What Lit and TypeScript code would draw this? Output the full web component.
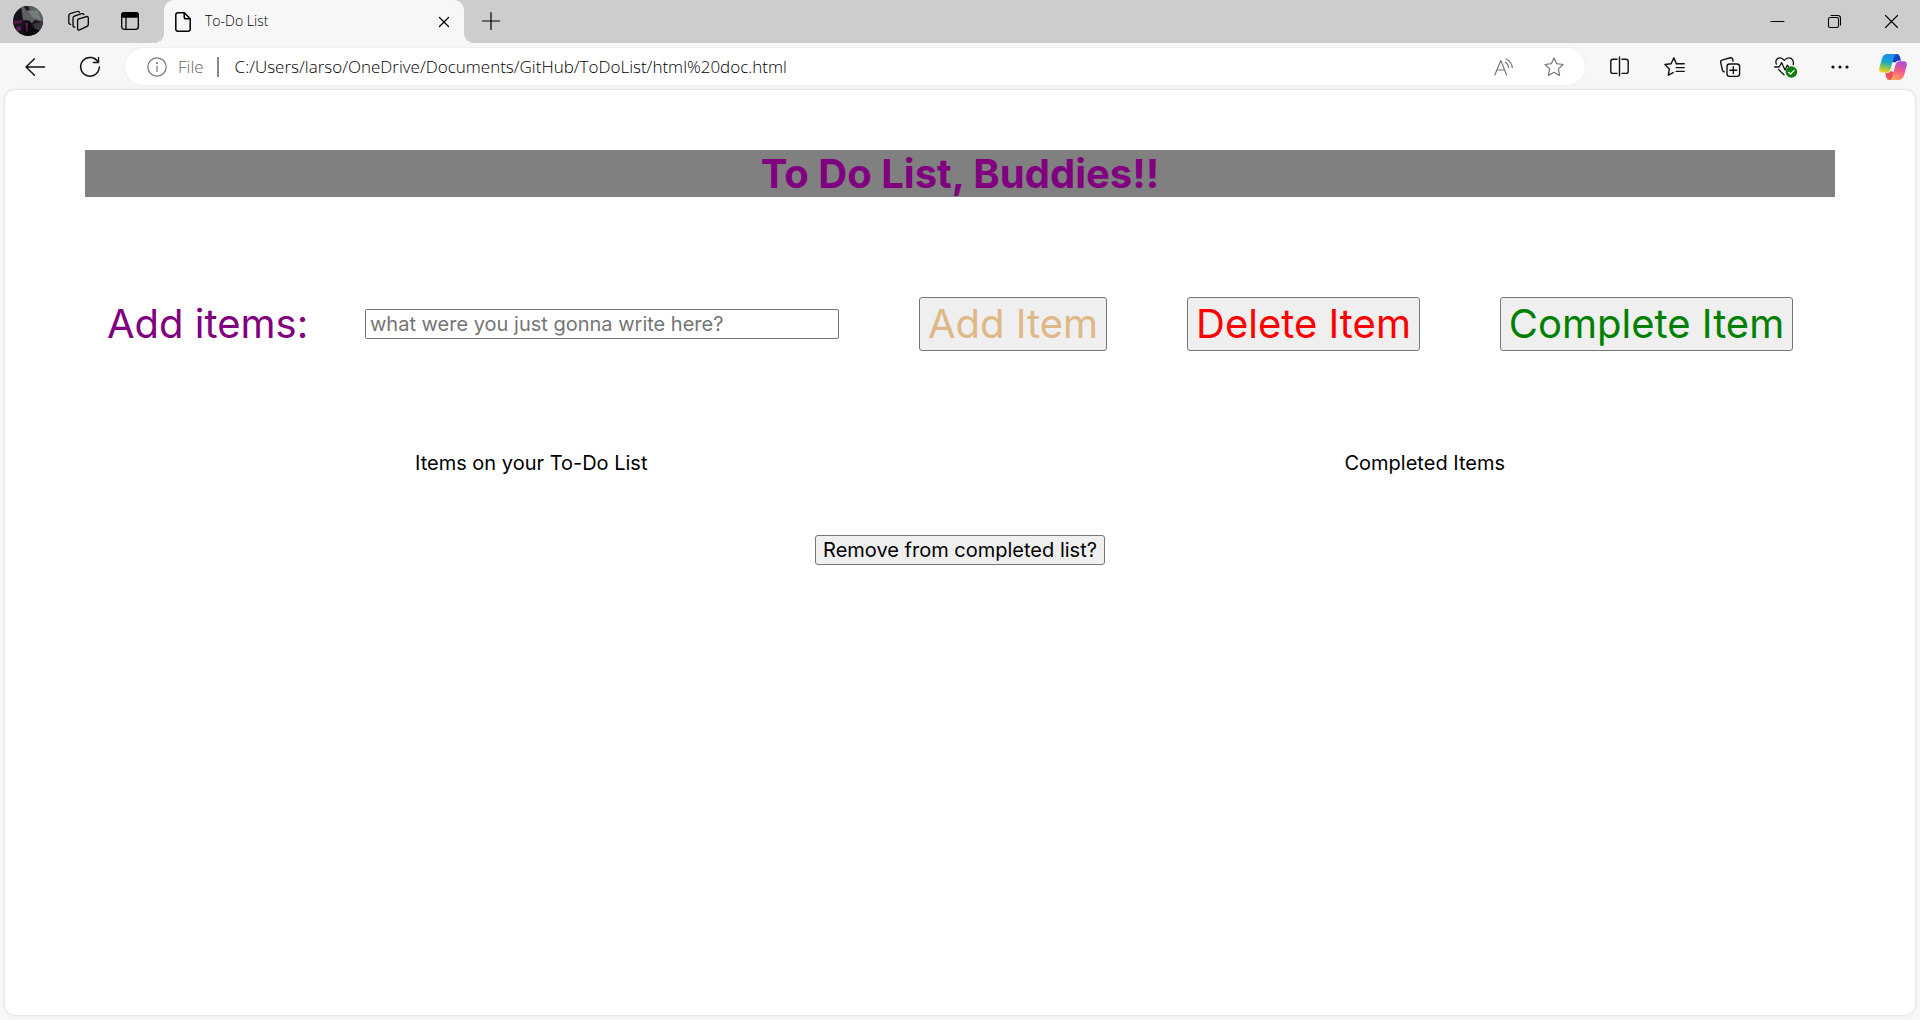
import { LitElement, html, css, svg } from "lit";
import { customElement } from "lit/decorators.js";

const line = css`
  svg {
    display: block;
    fill: none;
    stroke: currentColor;
    stroke-linecap: round;
    stroke-linejoin: round;
    overflow: visible;
  }
  button {
    font: inherit;
    color: inherit;
  }
  .icon-btn {
    display: flex;
    align-items: center;
    justify-content: center;
    flex: none;
    padding: 0;
    border: 0;
    background: none;
  }
`;

const icon = (w: number, h: number, body: unknown, sw = 1.3) =>
  html`<svg width=${w} height=${h} viewBox="0 0 ${w} ${h}" stroke-width=${sw} aria-hidden="true">${body}</svg>`;

const starPath = "M10 .9 L12.7 6.7 L19 7.5 L14.4 11.9 L15.6 18.4 L10 15.3 L4.4 18.4 L5.6 11.9 L1 7.5 L7.3 6.7 Z";

const icons = {
  avatar: icon(30, 30, svg`
    <defs><clipPath id="face"><circle cx="15" cy="15" r="15"/></clipPath></defs>
    <g clip-path="url(#face)" stroke="none">
      <rect width="30" height="30" fill="#17131c"/>
      <path d="M8 0H30V16L22 14L19 17L10 14Z" fill="#5c6062"/>
      <path d="M15 5L25 4L28 14L20 12Z" fill="#777d7c"/>
      <path d="M10 0L14 5L17 3L15 0Z" fill="#1d1d20"/>
      <path d="M12 14L17 15L19 22L27 20L26 30H10Z" fill="#0b080e"/>
      <path d="M1 15L9 14V17L1 18Z" fill="#5b1648"/>
      <path d="M3 21L8 20L8 24L4 25Z" fill="#6b1a58"/>
      <path d="M12 17L15 16V25L13 26Z" fill="#4c183f"/>
      <path d="M20 18L30 15V25L22 23Z" fill="#39363d"/>
    </g>`),
  workspaces: icon(21, 20, svg`
    <path d="M10.2 8.2 L18.4 5.6 Q20.3 5.1 20.3 7 V13.4 Q20.3 14.8 19 15.4 L11.6 18.9 Q9.6 19.6 9.6 17.7 V9.6 Q9.6 8.5 10.2 8.2Z"/>
    <path d="M6.8 16.2 Q5 16.2 5 14.3 V7.2 Q5 5.6 6.4 5.2 L13.6 2.7 Q15.4 2.3 15.9 3.6"/>
    <path d="M2.6 13.4 Q.8 13.4 .8 11.5 V4.6 Q.8 3.1 2.2 2.6 L9.2 .5 Q10.6 .2 11.4 1.2"/>`),
  tabs: icon(18, 18, svg`
    <rect x=".7" y=".7" width="16.6" height="16.6" rx="2.6"/>
    <path d="M.7 5V3.2Q.7 .7 3.2 .7H14.8Q17.3 .7 17.3 3.2V5Z" fill="currentColor"/>
    <path d="M5 5V17"/>`),
  page: icon(16, 20, svg`
    <path d="M3 .8H9.2L15.2 6.8V17Q15.2 19.2 13 19.2H3Q.8 19.2 .8 17V3Q.8 .8 3 .8Z"/>
    <path d="M9.2 1V5Q9.2 6.8 11 6.8H15"/>`, 1.5),
  tabClose: icon(10, 10, svg`<path d="M.5 .5L9.5 9.5M9.5 .5L.5 9.5"/>`),
  plus: icon(18, 18, svg`<path d="M9 .5V17.5M.5 9H17.5"/>`, 1.2),
  minimize: icon(13, 13, svg`<path d="M0 6.5H13"/>`, 1),
  restore: icon(13, 13, svg`
    <rect x=".5" y="2.5" width="10" height="10" rx="1.6"/>
    <path d="M3 .5H9.8Q12.5 .5 12.5 3.2V10"/>`, 1.1),
  close: icon(13, 13, svg`<path d="M.5 .5L12.5 12.5M12.5 .5L.5 12.5"/>`, 1.1),
  back: icon(20, 18, svg`<path d="M9.5 .8L1 9L9.5 17.2M1 9H19.6"/>`, 1.4),
  refresh: icon(20, 20, svg`
    <path d="M18.2 5.4A9.3 9.3 0 1 0 19.3 10"/>
    <path d="M18.5 .6V5.6H13.4"/>`, 1.5),
  info: icon(20, 20, svg`
    <circle cx="10" cy="10" r="9.2"/>
    <path d="M10 9V14.4"/><circle cx="10" cy="6" r=".5" fill="currentColor"/>`, 1.2),
  read: icon(20, 18, svg`
    <path d="M.8 17L6.8 2.4L12.6 17M2.8 12H10.8"/>
    <path d="M11.4 4.2Q14.3 6 14.6 9.6M12 1Q17.6 3.4 18.3 9.6"/>`, 1.2),
  star: icon(20, 19, svg`<path d=${starPath}/>`, 1.2),
  split: icon(19, 19, svg`
    <path d="M7 2.2H3Q.8 2.2 .8 4.4V14.2Q.8 16.4 3 16.4H7M12 2.2H16Q18.2 2.2 18.2 4.4V14.2Q18.2 16.4 16 16.4H12M9.5 0V18.8"/>`, 1.4),
  favorites: icon(21, 19, svg`
    <path d="M12.4 6.8L9.8 .9L7.1 6.7L.9 7.5L5.4 11.9L4.3 18.2L9.2 15.6"/>
    <path d="M12.4 6.8H20.2M12.2 10.6H20.2M12.2 14.4H20.2"/>`, 1.4),
  collections: icon(20, 20, svg`
    <rect x="7" y="7" width="12.6" height="12.4" rx="2.6"/>
    <path d="M13.3 9.8V16.6M9.9 13.2H16.7"/>
    <path d="M4.2 14.8Q2.8 14.6 2.5 13.3L.7 5.3Q.3 3.5 2 3.1L10.4 .8Q12.2 .5 12.7 2.2L13.1 4"/>`, 1.4),
  heart: icon(23, 21, svg`
    <path d="M3.4 8.2Q1.8 4.2 4.8 2.4Q8.4 .6 11.2 4.4Q14.5 .6 18.1 2.4Q21.1 4.2 20.2 8.6"/>
    <path d="M1.6 11H6.2L8.6 6.6L12 14L14.2 9.2L15.6 11.2"/>
    <path d="M5.4 13.4L11 18.8"/>
    <circle cx="18.4" cy="16" r="5.8" fill="#107c10" stroke="none"/>
    <path d="M15.8 16.4L17.6 18L21.2 14.4" stroke="#fff"/>`, 1.3),
  more: icon(18, 4, svg`
    <g fill="currentColor" stroke="none"><circle cx="2" cy="2" r="1.6"/><circle cx="9" cy="2" r="1.6"/><circle cx="16" cy="2" r="1.6"/></g>`),
  copilot: icon(28, 26, svg`
    <defs>
      <linearGradient id="cool" x1=".5" y1="0" x2=".3" y2="1"><stop offset=".1" stop-color="#1a8fe8"/><stop offset=".45" stop-color="#18a9c4"/><stop offset=".7" stop-color="#7dc457"/><stop offset="1" stop-color="#ffd01e"/></linearGradient>
      <linearGradient id="warm" x1=".7" y1="0" x2=".4" y2="1"><stop offset="0" stop-color="#a34de0"/><stop offset=".5" stop-color="#f2598a"/><stop offset="1" stop-color="#ffa45c"/></linearGradient>
      <linearGradient id="deep" x1="0" y1="0" x2="1" y2="1"><stop offset="0" stop-color="#1553d8"/><stop offset="1" stop-color="#1b2fb5"/></linearGradient>
    </defs>
    <g stroke="none">
      <path d="M14 0H17.8Q20 0 20.8 2.4L22 6.8Q18 6 16.4 8.4L13 8Z" fill="url(#deep)"/>
      <path d="M14 26H10.4Q8 26 7.4 23.6L6.2 18.6Q10 19.6 11.6 17L15 18Z" fill="#ef4f55"/>
      <path d="M8.4 0H17.8Q15.6 .4 15 2.8L11.6 15Q10.6 18.6 7.2 18.6H3.4Q-.6 18.4 .3 14L3 4.4Q4.4 0 8.4 0Z" fill="url(#cool)"/>
      <path d="M19.6 26H10.4Q12.6 25.6 13.2 23.2L16.4 11Q17.4 7.2 20.8 7.2H24.6Q28.6 7.4 27.7 11.8L25 21.6Q23.6 26 19.6 26Z" fill="url(#warm)"/>
    </g>`),
};

@customElement("window-bar")
class WindowBar extends LitElement {
  static styles = [line, css`
    :host {
      display: flex;
      height: 43px;
      background: #cdcdcd;
      color: #000;
      font: 350 14px/20px "Open Sans", "Noto Sans", sans-serif;
    }
    .lead { display: flex; padding: 0 9px 0 2px; }
    .lead .icon-btn { width: 51px; }
    .tab {
      position: relative;
      display: flex;
      align-items: center;
      width: 300px;
      padding: 0 15px 0 11px;
      box-sizing: border-box;
      background: #f7f7f7;
      border-radius: 10px 10px 0 0;
    }
    .tab::before, .tab::after {
      content: "";
      position: absolute;
      bottom: 0;
      width: 10px;
      height: 10px;
    }
    .tab::before { right: 100%; background: radial-gradient(circle at 0 0, transparent 10px, #f7f7f7 10px); }
    .tab::after { left: 100%; background: radial-gradient(circle at 100% 0, transparent 10px, #f7f7f7 10px); }
    .title { flex: 1; padding: 0 0 2px 14px; }
    .new { width: 53px; }
    .new svg { margin-bottom: 2px; }
    .lead svg { margin-bottom: 1px; }
    .controls { display: flex; margin-left: auto; }
    .controls .icon-btn { width: 57px; }
  `];

  render() {
    return html`
      <div class="lead">
        <button class="icon-btn" aria-label="Profile">${icons.avatar}</button>
        <button class="icon-btn" aria-label="Workspaces">${icons.workspaces}</button>
        <button class="icon-btn" aria-label="Tab actions">${icons.tabs}</button>
      </div>
      <div class="tab">
        ${icons.page}
        <span class="title">To-Do List</span>
        <button class="icon-btn" aria-label="Close tab">${icons.tabClose}</button>
      </div>
      <button class="icon-btn new" aria-label="New tab">${icons.plus}</button>
      <div class="controls">
        <button class="icon-btn" aria-label="Minimize">${icons.minimize}</button>
        <button class="icon-btn" aria-label="Restore">${icons.restore}</button>
        <button class="icon-btn" aria-label="Close">${icons.close}</button>
      </div>`;
  }
}

@customElement("address-bar")
class AddressBar extends LitElement {
  static styles = [line, css`
    :host {
      display: flex;
      align-items: center;
      height: 47px;
      color: #111;
      font: 340 17px/24px "Open Sans", "Noto Sans", sans-serif;
    }
    .nav { display: flex; padding: 0 8px 0 7px; }
    .icon-btn { width: 55px; height: 37px; }
    .pill {
      display: flex;
      align-items: center;
      flex: 1;
      height: 37px;
      padding: 0 6px 0 22px;
      box-sizing: border-box;
      background: #fff;
      border-radius: 19px;
      box-shadow: 0 0 3px #e8e8e8;
      color: #767676;
    }
    .pill .icon-btn { width: 50px; }
    .scheme { padding: 0 13px 0 11px; color: #666; }
    .divider { width: 2px; height: 20px; background: #8a8a8a; }
    .url {
      flex: 1;
      min-width: 0;
      padding: 0 0 0 16px;
      border: 0;
      outline: 0;
      background: none;
      color: #000;
      font: inherit;
    }
    .tools { display: flex; padding: 0 2px 0 7px; }
    .tools .icon-btn:last-child { width: 51px; }
  `];

  render() {
    return html`
      <div class="nav">
        <button class="icon-btn" aria-label="Back">${icons.back}</button>
        <button class="icon-btn" aria-label="Refresh">${icons.refresh}</button>
      </div>
      <div class="pill">
        ${icons.info}
        <span class="scheme">File</span>
        <span class="divider"></span>
        <input class="url" aria-label="Address" .value=${"C:/Users/larso/OneDrive/Documents/GitHub/ToDoList/html%20doc.html"} />
        <button class="icon-btn" aria-label="Read aloud">${icons.read}</button>
        <button class="icon-btn" aria-label="Add to favorites">${icons.star}</button>
      </div>
      <div class="tools">
        <button class="icon-btn" aria-label="Split screen">${icons.split}</button>
        <button class="icon-btn" aria-label="Favorites">${icons.favorites}</button>
        <button class="icon-btn" aria-label="Collections">${icons.collections}</button>
        <button class="icon-btn" aria-label="Browser essentials">${icons.heart}</button>
        <button class="icon-btn" aria-label="Settings and more">${icons.more}</button>
        <button class="icon-btn" aria-label="Copilot">${icons.copilot}</button>
      </div>`;
  }
}

@customElement("todo-page")
class TodoPage extends LitElement {
  static styles = css`
    :host {
      display: block;
      padding: 60px 80px;
      color: #000;
      font: 20px/24px Inter, Roboto, sans-serif;
    }
    h1 {
      margin: 0 0 100px;
      background: gray;
      color: purple;
      font-size: 40px;
      line-height: 47px;
      font-weight: 700;
      text-align: center;
    }
    form {
      display: flex;
      align-items: center;
      gap: 80px;
      padding-left: 22px;
    }
    .entry { display: flex; align-items: center; }
    label { width: 258px; color: purple; font-size: 40px; line-height: 48px; }
    button, input {
      box-sizing: border-box;
      border: 1px solid #767676;
      border-radius: 3px;
      font: inherit;
    }
    input { width: 474px; height: 30px; padding: 0 4px; border-radius: 2px; }
    input::placeholder { color: #757575; }
    button { padding: 0; background: #efefef; color: #000; }
    .big { height: 54px; font-size: 40px; line-height: 48px; }
    .add { width: 188px; color: burlywood; }
    .delete { width: 233px; color: red; }
    .complete { width: 293px; color: green; }
    .lists {
      display: flex;
      justify-content: space-between;
      margin: 100px 0 60px;
      padding: 0 330px;
    }
    h2 { margin: 0; font-size: 20px; font-weight: 400; }
    .remove { display: block; width: 290px; height: 30px; margin: 0 auto; }
  `;

  render() {
    return html`
      <h1>To Do List, Buddies!!</h1>
      <form @submit=${(e: Event) => e.preventDefault()}>
        <div class="entry">
          <label for="item">Add items:</label>
          <input id="item" type="text" placeholder="what were you just gonna write here?" />
        </div>
        <button class="big add">Add Item</button>
        <button class="big delete" type="button">Delete Item</button>
        <button class="big complete" type="button">Complete Item</button>
      </form>
      <div class="lists">
        <h2>Items on your To-Do List</h2>
        <h2>Completed Items</h2>
      </div>
      <button class="remove">Remove from completed list?</button>`;
  }
}

@customElement("app-root")
class AppRoot extends LitElement {
  static styles = css`
    :host {
      display: flex;
      flex-direction: column;
      min-height: 100vh;
      background: #f7f7f7;
    }
    .view {
      flex: 1;
      margin: 0 5px 5px;
      background: #fff;
      border-radius: 10px;
      box-shadow: 0 0 3px #ccc;
    }
  `;

  render() {
    return html`
      <window-bar></window-bar>
      <address-bar></address-bar>
      <main class="view"><todo-page></todo-page></main>`;
  }
}
